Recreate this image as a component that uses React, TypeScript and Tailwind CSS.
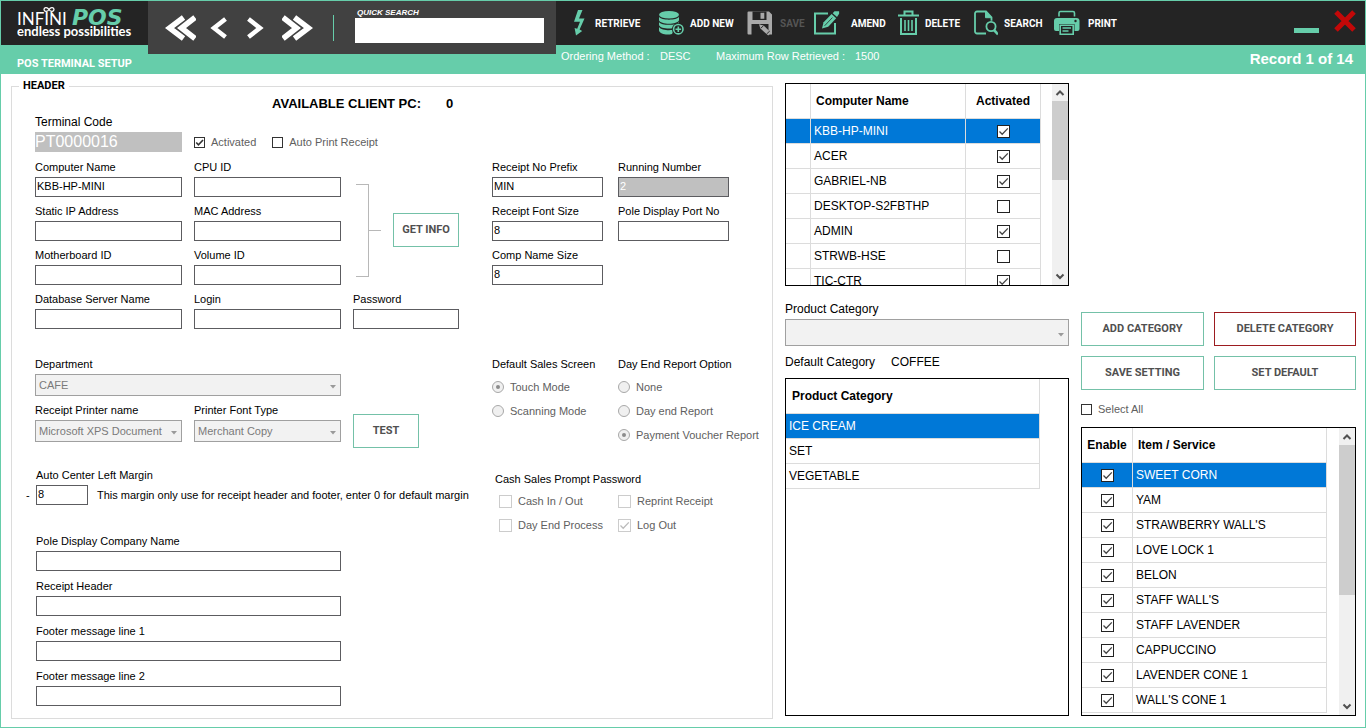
import React, { useId } from 'react';
import clsx from 'clsx';

interface FieldProps {
    label: string;
    value?: string;
    type?: string;
    className?: string;
    inputClass?: string;
}

function Field({ label, value = '', type = 'text', className, inputClass }: FieldProps) {
    const id = useId();
    return (
        <div className={clsx('flex min-w-0 flex-col gap-0.5', className)}>
            <label htmlFor={id} className="whitespace-nowrap leading-4">{label}</label>
            <input
                id={id}
                type={type}
                defaultValue={value}
                className={clsx('h-5 w-full border border-[#5c5c60] px-px pb-0.5 outline-none', inputClass)}
            />
        </div>
    );
}

interface SelectFieldProps {
    label: string;
    options: string[];
    className?: string;
    labelClass?: string;
    boxClass?: string;
}

function SelectField({ label, options, className, labelClass, boxClass = 'h-[22px]' }: SelectFieldProps) {
    const id = useId();
    return (
        <div className={clsx('flex min-w-0 flex-col gap-0.5', className)}>
            <label htmlFor={id} className={clsx('whitespace-nowrap leading-4', labelClass)}>{label}</label>
            <div className="relative">
                <select
                    id={id}
                    disabled
                    className={clsx('block w-full appearance-none border border-[#a0a0a0] bg-[#f2f2f2] pr-[18px] pl-[3px] text-[#7a7a7a] opacity-100', boxClass)}
                >
                    {options.map((o) => <option key={o}>{o}</option>)}
                </select>
                <svg viewBox="0 0 6 4" className="pointer-events-none absolute top-1/2 right-[5px] h-1 w-1.5" fill="#9a9a9a">
                    <path d="M0 0h6L3 3.5z" />
                </svg>
            </div>
        </div>
    );
}

interface CheckProps {
    label: string;
    checked?: boolean;
    disabled?: boolean;
    tone?: 'bold' | 'grid' | 'muted';
    hideLabel?: boolean;
}

function Check({ label, checked = false, disabled = false, tone = 'bold', hideLabel = false }: CheckProps) {
    const box = {
        bold: 'size-[11px] border-[#333] text-[#333]',
        grid: 'size-[13px] border-[#222] text-[#444]',
        muted: 'size-[13px] border-[#ccc] text-[#bbb]',
    }[tone];
    return (
        <label className="inline-flex items-center gap-1.5 whitespace-nowrap leading-4 text-[#606060]">
            <span className={clsx('grid shrink-0 place-items-center border bg-white', box)}>
                <input
                    type="checkbox"
                    aria-label={label}
                    defaultChecked={checked}
                    disabled={disabled}
                    className="peer size-full appearance-none [grid-area:1/1]"
                />
                <svg viewBox="0 0 11 11" className="pointer-events-none invisible size-full [grid-area:1/1] peer-checked:visible" fill="none" stroke="currentColor" strokeWidth={tone === 'bold' ? 2 : 1.3}>
                    <path d="M1.5 5.5 4.2 8.2 9.8 2.4" />
                </svg>
            </span>
            {!hideLabel && label}
        </label>
    );
}

function RadioGroup({ title, name, options, selected }: { title: string; name: string; options: string[]; selected: string }) {
    return (
        <fieldset className="min-w-0">
            <legend className="mb-[3px] whitespace-nowrap leading-4">{title}</legend>
            {options.map((o) => (
                <label key={o} className="flex h-6 items-center gap-1.5 whitespace-nowrap text-[#606060]">
                    <span className="grid size-3 shrink-0 place-items-center">
                        <input type="radio" name={name} defaultChecked={o === selected} disabled className="peer size-3 appearance-none rounded-full border border-[#a8a8a8] bg-[#f0f0f0] [grid-area:1/1]" />
                        <span className="invisible size-1 rounded-full bg-[#8c8c8c] [grid-area:1/1] peer-checked:visible" />
                    </span>
                    {o}
                </label>
            ))}
        </fieldset>
    );
}

function OutlineButton({ children, danger, className }: { children: React.ReactNode; danger?: boolean; className?: string }) {
    return (
        <button
            type="button"
            className={clsx(
                "h-[34px] border bg-white font-['Roboto',sans-serif] text-[11px] font-bold whitespace-nowrap text-[#505050]",
                danger ? 'border-[#9c1c20]' : 'border-[#74c1a8]',
                className,
            )}
        >
            {children}
        </button>
    );
}

function ScrollBar({ thumbClass }: { thumbClass: string }) {
    return (
        <div className="flex w-4 shrink-0 flex-col bg-[#f0f0f0]" aria-hidden="true">
            <svg viewBox="0 0 16 17" className="h-[17px] w-4 shrink-0" fill="none" stroke="#505050" strokeWidth="2">
                <path d="M4.5 11 8 7.5 11.5 11" />
            </svg>
            <div className="flex-1">
                <div className={clsx('bg-[#cdcdcd]', thumbClass)} />
            </div>
            <svg viewBox="0 0 16 17" className="h-[17px] w-4 shrink-0" fill="none" stroke="#505050" strokeWidth="2">
                <path d="M4.5 6.5 8 10l3.5-3.5" />
            </svg>
        </div>
    );
}

const headCell = 'h-[35px] border-r border-b border-[#dcdcdc] text-[12px] font-bold whitespace-nowrap';
const bodyCell = 'h-[25px] border-r border-b border-[#dcdcdc] text-[12px] whitespace-nowrap';

const computers = [
    { name: 'KBB-HP-MINI', active: true },
    { name: 'ACER', active: true },
    { name: 'GABRIEL-NB', active: true },
    { name: 'DESKTOP-S2FBTHP', active: false },
    { name: 'ADMIN', active: true },
    { name: 'STRWB-HSE', active: false },
    { name: 'TIC-CTR', active: true },
];

const categories = ['ICE CREAM', 'SET', 'VEGETABLE'];

const items = [
    'SWEET CORN',
    'YAM',
    "STRAWBERRY WALL'S",
    'LOVE LOCK 1',
    'BELON',
    "STAFF WALL'S",
    'STAFF LAVENDER',
    'CAPPUCCINO',
    'LAVENDER CONE 1',
    "WALL'S CONE 1",
];

const BoltIcon = () => (
    <svg viewBox="0 0 16 26" className="h-[26px] w-4" fill="#66cdaa">
        <path d="M5 0h4.5L6 8.5h5.5L6.6 19.5l2.6 1.6L3 25.5 1.6 18l2.6.8L7 11.8H1z" />
    </svg>
);

const DatabaseIcon = () => (
    <svg viewBox="0 0 25 26" className="h-[26px] w-[25px]" fill="#66cdaa">
        <ellipse cx="10" cy="4.8" rx="10" ry="3.8" />
        <path d="M0 6.8c2 3.8 18 3.8 20 0v3.4c-1 4.6-19 4.6-20 0z" />
        <path d="M0 12c2 3.8 18 3.8 20 0v3c-1 4.8-19 4.8-20 0z" />
        <path d="M0 17c2 3.6 12 3.8 15 2.6l-2 4.4C8 25.400 1 24.400 0 20.600z" />
        <circle cx="19.300" cy="19.200" r="6.300" fill="#242424" />
        <circle cx="19.300" cy="19.200" r="4.700" fill="none" stroke="#66cdaa" strokeWidth="1.600" />
        <path d="M18.500 16.400h1.600v2h2V20h-2v2h-1.600v-2h-2v-1.600h2z" />
    </svg>
);

const SaveIcon = () => (
    <svg viewBox="0 0 27 26" className="h-[26px] w-[27px]">
        <path d="M1.5 1.5H22l3 3v20H1.5a1 1 0 0 1-1-1v-21a1 1 0 0 1 1-1z" fill="#a9a9a9" />
        <path d="M5.5 1.5h14V10h-14zM4.5 14h17v11h-17z" fill="#242424" />
        <path d="M13.5 2.8h3.8v6h-3.8z" fill="#a9a9a9" />
        <path d="m12 14.2 4.6 1.3 7.6 7.3-3 2.8-7.8-7.2z" fill="#a9a9a9" />
        <path d="m13.8 18.2 2.8-2.6M19.6 24l3.2-3" stroke="#242424" strokeWidth=".9" />
    </svg>
);

const AmendIcon = () => (
    <svg viewBox="0 0 31 26" className="h-[26px] w-[31px]">
        <path d="M14 3.5H1v20h20V13" fill="none" stroke="#66cdaa" strokeWidth="2" />
        <path d="m8 18.5 1.6-6.3 8-8.3 4.6 4.3-8 8.500z" fill="#66cdaa" />
        <path d="m18.700 3.200 1.800-1.900h4.600v2.500L23 6.900z" fill="#66cdaa" />
        <path d="m10.600 15.800 7.800-8.200" stroke="#242424" strokeWidth=".8" />
    </svg>
);

const TrashIcon = () => (
    <svg viewBox="0 0 21 26" className="h-[26px] w-[21px]" fill="none" stroke="#66cdaa" strokeWidth="2">
        <path d="M6.5 4.500v-3h8v3M0 5.500h21M3 8v16h15V8" />
        <path d="M7 10v11M10.500 10v11M14 10v11" strokeWidth="1.600" />
    </svg>
);

const FileSearchIcon = () => (
    <svg viewBox="0 0 24 26" className="h-[26px] w-6" fill="none" stroke="#66cdaa" strokeWidth="1.8">
        <path d="M12 23.5H3a2 2 0 0 1-2-2V3.5a2 2 0 0 1 2-2h9l5.5 5.8v3.4" />
        <path d="M11.5 1.5v6.2h6z" fill="#66cdaa" strokeWidth="1" />
        <circle cx="17" cy="16.5" r="4.6" />
        <path d="m20 20 4 4.3" strokeWidth="2.6" />
    </svg>
);

const PrintIcon = () => (
    <svg viewBox="0 0 28 26" className="h-[26px] w-7">
        <path d="M5 6.5V3a1.500 1.500 0 0 1 1.500-1.500h12.500A1.500 1.500 0 0 1 20.500 3v3.500" fill="none" stroke="#66cdaa" strokeWidth="1.600" />
        <path d="M3 8h19.500a3 3 0 0 1 3 3v8a2 2 0 0 1-2 2h-21.500a2 2 0 0 1-2-2v-8a3 3 0 0 1 3-3z" fill="#66cdaa" />
        <circle cx="21.500" cy="11" r="1.200" fill="#242424" />
        <path d="M5 14h15.500v11H5z" fill="#242424" />
        <path d="M6.200 15.200h13v9h-13z" fill="none" stroke="#66cdaa" strokeWidth="1.600" />
        <path d="M8.500 18h8.500M8.500 21h6" stroke="#66cdaa" strokeWidth="1.300" />
    </svg>
);

const tools = [
    { label: 'RETRIEVE', Icon: BoltIcon },
    { label: 'ADD NEW', Icon: DatabaseIcon },
    { label: 'SAVE', Icon: SaveIcon, disabled: true },
    { label: 'AMEND', Icon: AmendIcon },
    { label: 'DELETE', Icon: TrashIcon },
    { label: 'SEARCH', Icon: FileSearchIcon },
    { label: 'PRINT', Icon: PrintIcon },
];

function NavButton({ label, d, wide }: { label: string; d: string; wide?: boolean }) {
    return (
        <button type="button" aria-label={label}>
            <svg
                viewBox={wide ? '0 0 31 26' : '0 0 17 26'}
                className={clsx('h-[26px]', wide ? 'w-[31px]' : 'w-[17px]')}
                fill="none"
                stroke="#fff"
                strokeWidth={wide ? 5.5 : 4.5}
            >
                <path d={d} />
            </svg>
        </button>
    );
}

function Logo() {
    return (
        <div className="h-11 bg-[#242424] pl-4" role="img" aria-label="Infini POS">
            <svg viewBox="0 0 120 44" className="h-11 w-[120px]">
                <text x="0" y="24" fill="#fff" fontFamily="Lato, sans-serif" fontSize="17">INFINI</text>
                <path d="M32 8.500c-2-3-5-2-5 0s3 3 5 0 5-2 5 0-3 3-5 0z" fill="none" stroke="#fff" strokeWidth="1.300" />
                <text x="55" y="24" fill="#66cdaa" fontFamily="DejaVu Sans, sans-serif" fontSize="22" fontStyle="italic" fontWeight="bold">POS</text>
                <text x="0" y="35" fill="#fff" fontFamily="Lato, sans-serif" fontSize="13" fontWeight="bold">endless possibilities</text>
            </svg>
        </div>
    );
}

function TopBar() {
    return (
        <header className="flex h-[73px] shrink-0 bg-[#66cdaa]">
            <div className="w-[147px] shrink-0">
                <Logo />
                <h1 className="mt-[11px] pl-4 font-['Roboto',sans-serif] text-[11px] leading-4 font-bold whitespace-nowrap text-white">POS TERMINAL SETUP</h1>
            </div>

            <div className="flex h-[53px] w-[408px] shrink-0 bg-[#414141] pr-3 pl-[17px]">
                <nav className="flex w-[148px] items-center justify-between">
                    <div className="flex gap-[14px]">
                        <NavButton wide label="First record" d="M18.500 2.500 4.500 13l14 10.500M30 2.500 16.500 13 30 23.500" />
                        <NavButton label="Previous record" d="M15.500 4 4 13l11.500 9" />
                    </div>
                    <div className="flex gap-[18px]">
                        <NavButton label="Next record" d="M1.500 4 13 13 1.500 22" />
                        <NavButton wide label="Last record" d="M1 2.500 14.500 13 1 23.500M12.500 2.500 26.500 13l-14 10.500" />
                    </div>
                </nav>
                <div className="mt-[14px] ml-5 h-[26px] w-px bg-[#66cdaa]" />
                <div className="ml-[21px] flex-1 pt-1.5">
                    <label htmlFor="quick-search" className="block pl-0.5 text-[8px] leading-[11px] font-bold text-white italic">QUICK SEARCH</label>
                    <input id="quick-search" type="text" className="block h-[25px] w-full bg-white px-1 outline-none" />
                </div>
            </div>

            <div className="min-w-0 flex-1">
                <div className="flex h-11 justify-between bg-[#242424] pr-[9px] pl-[17px]">
                    <div className="grid grid-cols-[86px_88px_67px_84px_76px_80px_auto]">
                        {tools.map(({ label, Icon, disabled }) => (
                            <button
                                key={label}
                                type="button"
                                disabled={disabled}
                                className={clsx(
                                    "flex items-center gap-1.5 font-['Roboto',sans-serif] text-[10px] font-bold whitespace-nowrap",
                                    disabled ? 'text-[#555]' : 'text-white',
                                )}
                            >
                                <Icon />
                                {label}
                            </button>
                        ))}
                    </div>
                    <div className="flex gap-[15px] pt-2">
                        <button type="button" aria-label="Minimize" className="flex h-6 w-[25px] items-end">
                            <span className="h-[5px] w-full bg-[#66cdaa]" />
                        </button>
                        <button type="button" aria-label="Close" className="h-6">
                            <svg viewBox="0 0 22 24" className="h-6 w-[22px]" fill="none" stroke="#c40808" strokeWidth="5">
                                <path d="m2 3 18 18M20 3 2 21" />
                            </svg>
                        </button>
                    </div>
                </div>
                <div className="flex justify-between pr-3 pl-[5px] text-white">
                    <dl className="flex pt-[3px] leading-4">
                        <dt className="w-[99px]">Ordering Method :</dt>
                        <dd className="w-14">DESC</dd>
                        <dt className="w-[139px]">Maximum Row Retrieved :</dt>
                        <dd>1500</dd>
                    </dl>
                    <p className="pt-1 text-[15px] leading-5 font-bold">Record 1 of 14</p>
                </div>
            </div>
        </header>
    );
}

function HeaderForm() {
    return (
        <fieldset className="min-w-0 border border-[#dcdcdc] pr-2 pl-[23px]">
            <legend className="-ml-4 px-1 font-['Roboto',sans-serif] leading-4 font-bold">HEADER</legend>
            <p className="flex gap-[25px] pl-[237px] text-[13px] leading-5 font-bold">
                <span>AVAILABLE CLIENT PC:</span>
                <span>0</span>
            </p>

            <div className="grid grid-cols-[minmax(0,424fr)_minmax(0,272fr)] gap-x-[33px]">
                <div>
                    <div className="grid grid-cols-[147fr_147fr_106fr] gap-x-3 gap-y-1.5">
                        <div className="mb-px flex flex-col gap-0.5">
                            <label htmlFor="terminal-code" className="text-[12px] leading-4">Terminal Code</label>
                            <input id="terminal-code" readOnly value="PT0000016" className="h-5 w-full bg-[#c0c0c0] text-[16px] leading-5 text-white outline-none" />
                        </div>
                        <div className="col-span-2 mb-px flex h-5 items-center gap-4 self-end">
                            <Check label="Activated" checked />
                            <Check label="Auto Print Receipt" />
                        </div>

                        <Field label="Computer Name" value="KBB-HP-MINI" />
                        <Field label="CPU ID" />
                        <div className="row-span-3 flex items-center pt-4 pl-[3px]">
                            <div className="h-[93px] w-[13px] border-y border-r border-[#b8b8b8]" />
                            <div className="h-px w-3 bg-[#b8b8b8]" />
                            <OutlineButton className="ml-3 flex-1">GET INFO</OutlineButton>
                        </div>
                        <Field label="Static IP Address" />
                        <Field label="MAC Address" />
                        <Field label="Motherboard ID" />
                        <Field label="Volume ID" />
                        <Field label="Database Server Name" />
                        <Field label="Login" />
                        <Field label="Password" type="password" />
                    </div>

                    <div className="mt-[27px] grid grid-cols-[147fr_147fr_106fr] gap-x-3 gap-y-1.5">
                        <SelectField label="Department" options={['CAFE']} className="col-span-2" />
                        <span />
                        <SelectField label="Receipt Printer name" options={['Microsoft XPS Document Writer']} />
                        <SelectField label="Printer Font Type" options={['Merchant Copy']} />
                        <OutlineButton className="mt-3 w-[66px]">TEST</OutlineButton>
                    </div>

                    <div className="mt-[19px] pl-px">
                        <label htmlFor="left-margin" className="block leading-4">Auto Center Left Margin</label>
                        <div className="mt-0.5 -ml-[10px] flex items-center">
                            <span className="w-[10px] shrink-0">-</span>
                            <input id="left-margin" defaultValue="8" className="h-5 w-[52px] shrink-0 border border-[#5c5c60] px-px pb-0.5 outline-none" />
                            <span className="ml-[9px] whitespace-nowrap">This margin only use for receipt header and footer, enter 0 for default margin</span>
                        </div>
                    </div>

                    <div className="mt-7 grid grid-cols-[306fr_118fr] gap-y-[7px] pl-px">
                        <Field label="Pole Display Company Name" className="col-start-1" />
                        <Field label="Receipt Header" className="col-start-1" />
                        <Field label="Footer message line 1" className="col-start-1" />
                        <Field label="Footer message line 2" className="col-start-1" />
                    </div>
                </div>

                <div className="pt-[45px]">
                    <div className="grid grid-cols-[111fr_146fr] gap-x-[15px] gap-y-1.5">
                        <Field label="Receipt No Prefix" value="MIN" />
                        <Field label="Running Number" value="2" inputClass="max-w-[111px] bg-[#c0c0c0] text-white" />
                        <Field label="Receipt Font Size" value="8" />
                        <Field label="Pole Display Port No" inputClass="max-w-[111px]" />
                        <Field label="Comp Name Size" value="8" />
                    </div>

                    <div className="mt-[71px] grid grid-cols-[111fr_146fr] gap-x-[15px]">
                        <RadioGroup title="Default Sales Screen" name="sales-screen" options={['Touch Mode', 'Scanning Mode']} selected="Touch Mode" />
                        <RadioGroup title="Day End Report Option" name="day-end" options={['None', 'Day end Report', 'Payment Voucher Report']} selected="Payment Voucher Report" />
                    </div>

                    <fieldset className="mt-6 min-w-0">
                        <legend className="mb-0.5 pl-[3px] leading-4">Cash Sales Prompt Password</legend>
                        <div className="grid grid-cols-[minmax(0,104fr)_minmax(0,146fr)] gap-x-[15px] pl-[7px]">
                            <div className="flex h-6 items-center"><Check tone="muted" disabled label="Cash In / Out" /></div>
                            <div className="flex h-6 items-center"><Check tone="muted" disabled label="Reprint Receipt" /></div>
                            <div className="flex h-6 items-center"><Check tone="muted" disabled label="Day End Process" /></div>
                            <div className="flex h-6 items-center"><Check tone="muted" disabled checked label="Log Out" /></div>
                        </div>
                    </fieldset>
                </div>
            </div>
        </fieldset>
    );
}

function ComputerTable() {
    return (
        <div className="flex h-[203px] shrink-0 overflow-hidden border border-black">
            <div className="min-w-0 flex-1 overflow-hidden pr-[11px]">
                <table className="w-full table-fixed border-separate border-spacing-0">
                    <thead>
                        <tr>
                            <th className={clsx(headCell, 'w-[25px]')} />
                            <th className={clsx(headCell, 'pl-[5px] text-left')}>Computer Name</th>
                            <th className={clsx(headCell, 'w-[75px] text-center')}>Activated</th>
                        </tr>
                    </thead>
                    <tbody>
                        {computers.map((c, i) => (
                            <tr key={c.name} className={i === 0 ? 'bg-[#0078d7] text-white' : 'bg-white'}>
                                <td className={bodyCell} />
                                <td className={clsx(bodyCell, 'pl-[3px]')}>{c.name}</td>
                                <td className={bodyCell}>
                                    <div className="flex justify-center">
                                        <Check tone="grid" hideLabel label={`${c.name} activated`} checked={c.active} />
                                    </div>
                                </td>
                            </tr>
                        ))}
                    </tbody>
                </table>
            </div>
            <ScrollBar thumbClass="h-[79px]" />
        </div>
    );
}

function CategoryTable() {
    return (
        <div className="mt-2 min-h-0 flex-1 overflow-hidden border border-black pr-7">
            <table className="w-full table-fixed border-separate border-spacing-0">
                <thead>
                    <tr>
                        <th className={clsx(headCell, 'pl-1.5 text-left')}>Product Category</th>
                    </tr>
                </thead>
                <tbody>
                    {categories.map((c, i) => (
                        <tr key={c} className={i === 0 ? 'bg-[#0078d7] text-white' : 'bg-white'}>
                            <td className={clsx(bodyCell, 'pl-[3px]')}>{c}</td>
                        </tr>
                    ))}
                </tbody>
            </table>
        </div>
    );
}

function ItemTable() {
    return (
        <div className="mt-[10px] flex min-h-0 flex-1 overflow-hidden border border-black">
            <div className="min-w-0 flex-1 overflow-hidden pr-3">
                <table className="w-full table-fixed border-separate border-spacing-0">
                    <thead>
                        <tr>
                            <th className={clsx(headCell, 'w-[51px] text-center')}>Enable</th>
                            <th className={clsx(headCell, 'pl-[5px] text-left')}>Item / Service</th>
                        </tr>
                    </thead>
                    <tbody>
                        {items.map((item, i) => (
                            <tr key={item} className={i === 0 ? 'bg-[#0078d7] text-white' : 'bg-white'}>
                                <td className={bodyCell}>
                                    <div className="flex justify-center">
                                        <Check tone="grid" hideLabel label={`Enable ${item}`} checked />
                                    </div>
                                </td>
                                <td className={clsx(bodyCell, 'pl-[3px]')}>{item}</td>
                            </tr>
                        ))}
                    </tbody>
                </table>
            </div>
            <ScrollBar thumbClass="h-[150px]" />
        </div>
    );
}

export default function App() {
    return (
        <div className="flex h-screen min-h-[728px] flex-col border border-[#66cdaa] bg-white font-['Liberation_Sans',Arial,sans-serif] text-[11px] text-black">
            <TopBar />
            <main className="grid min-h-0 flex-1 grid-cols-[minmax(0,762fr)_minmax(0,284fr)_minmax(0,275fr)] grid-rows-[minmax(0,1fr)] gap-x-3 pt-1 pr-[9px] pb-2 pl-[10px]">
                <HeaderForm />

                <section className="flex min-h-0 flex-col pt-[5px] pb-[3px]">
                    <ComputerTable />
                    <SelectField label="Product Category" options={['']} className="mt-[15px]" labelClass="text-[12px]" boxClass="h-[27px]" />
                    <p className="mt-2 flex gap-4 text-[12px] leading-4">
                        <span>Default Category</span>
                        <span>COFFEE</span>
                    </p>
                    <CategoryTable />
                </section>

                <section className="flex min-h-0 flex-col pt-[234px] pb-[3px]">
                    <div className="grid grid-cols-[123fr_142fr] gap-[10px]">
                        <OutlineButton>ADD CATEGORY</OutlineButton>
                        <OutlineButton danger>DELETE CATEGORY</OutlineButton>
                        <OutlineButton>SAVE SETTING</OutlineButton>
                        <OutlineButton>SET DEFAULT</OutlineButton>
                    </div>
                    <div className="mt-[11px] flex h-4 items-center">
                        <Check label="Select All" />
                    </div>
                    <ItemTable />
                </section>
            </main>
        </div>
    );
}
